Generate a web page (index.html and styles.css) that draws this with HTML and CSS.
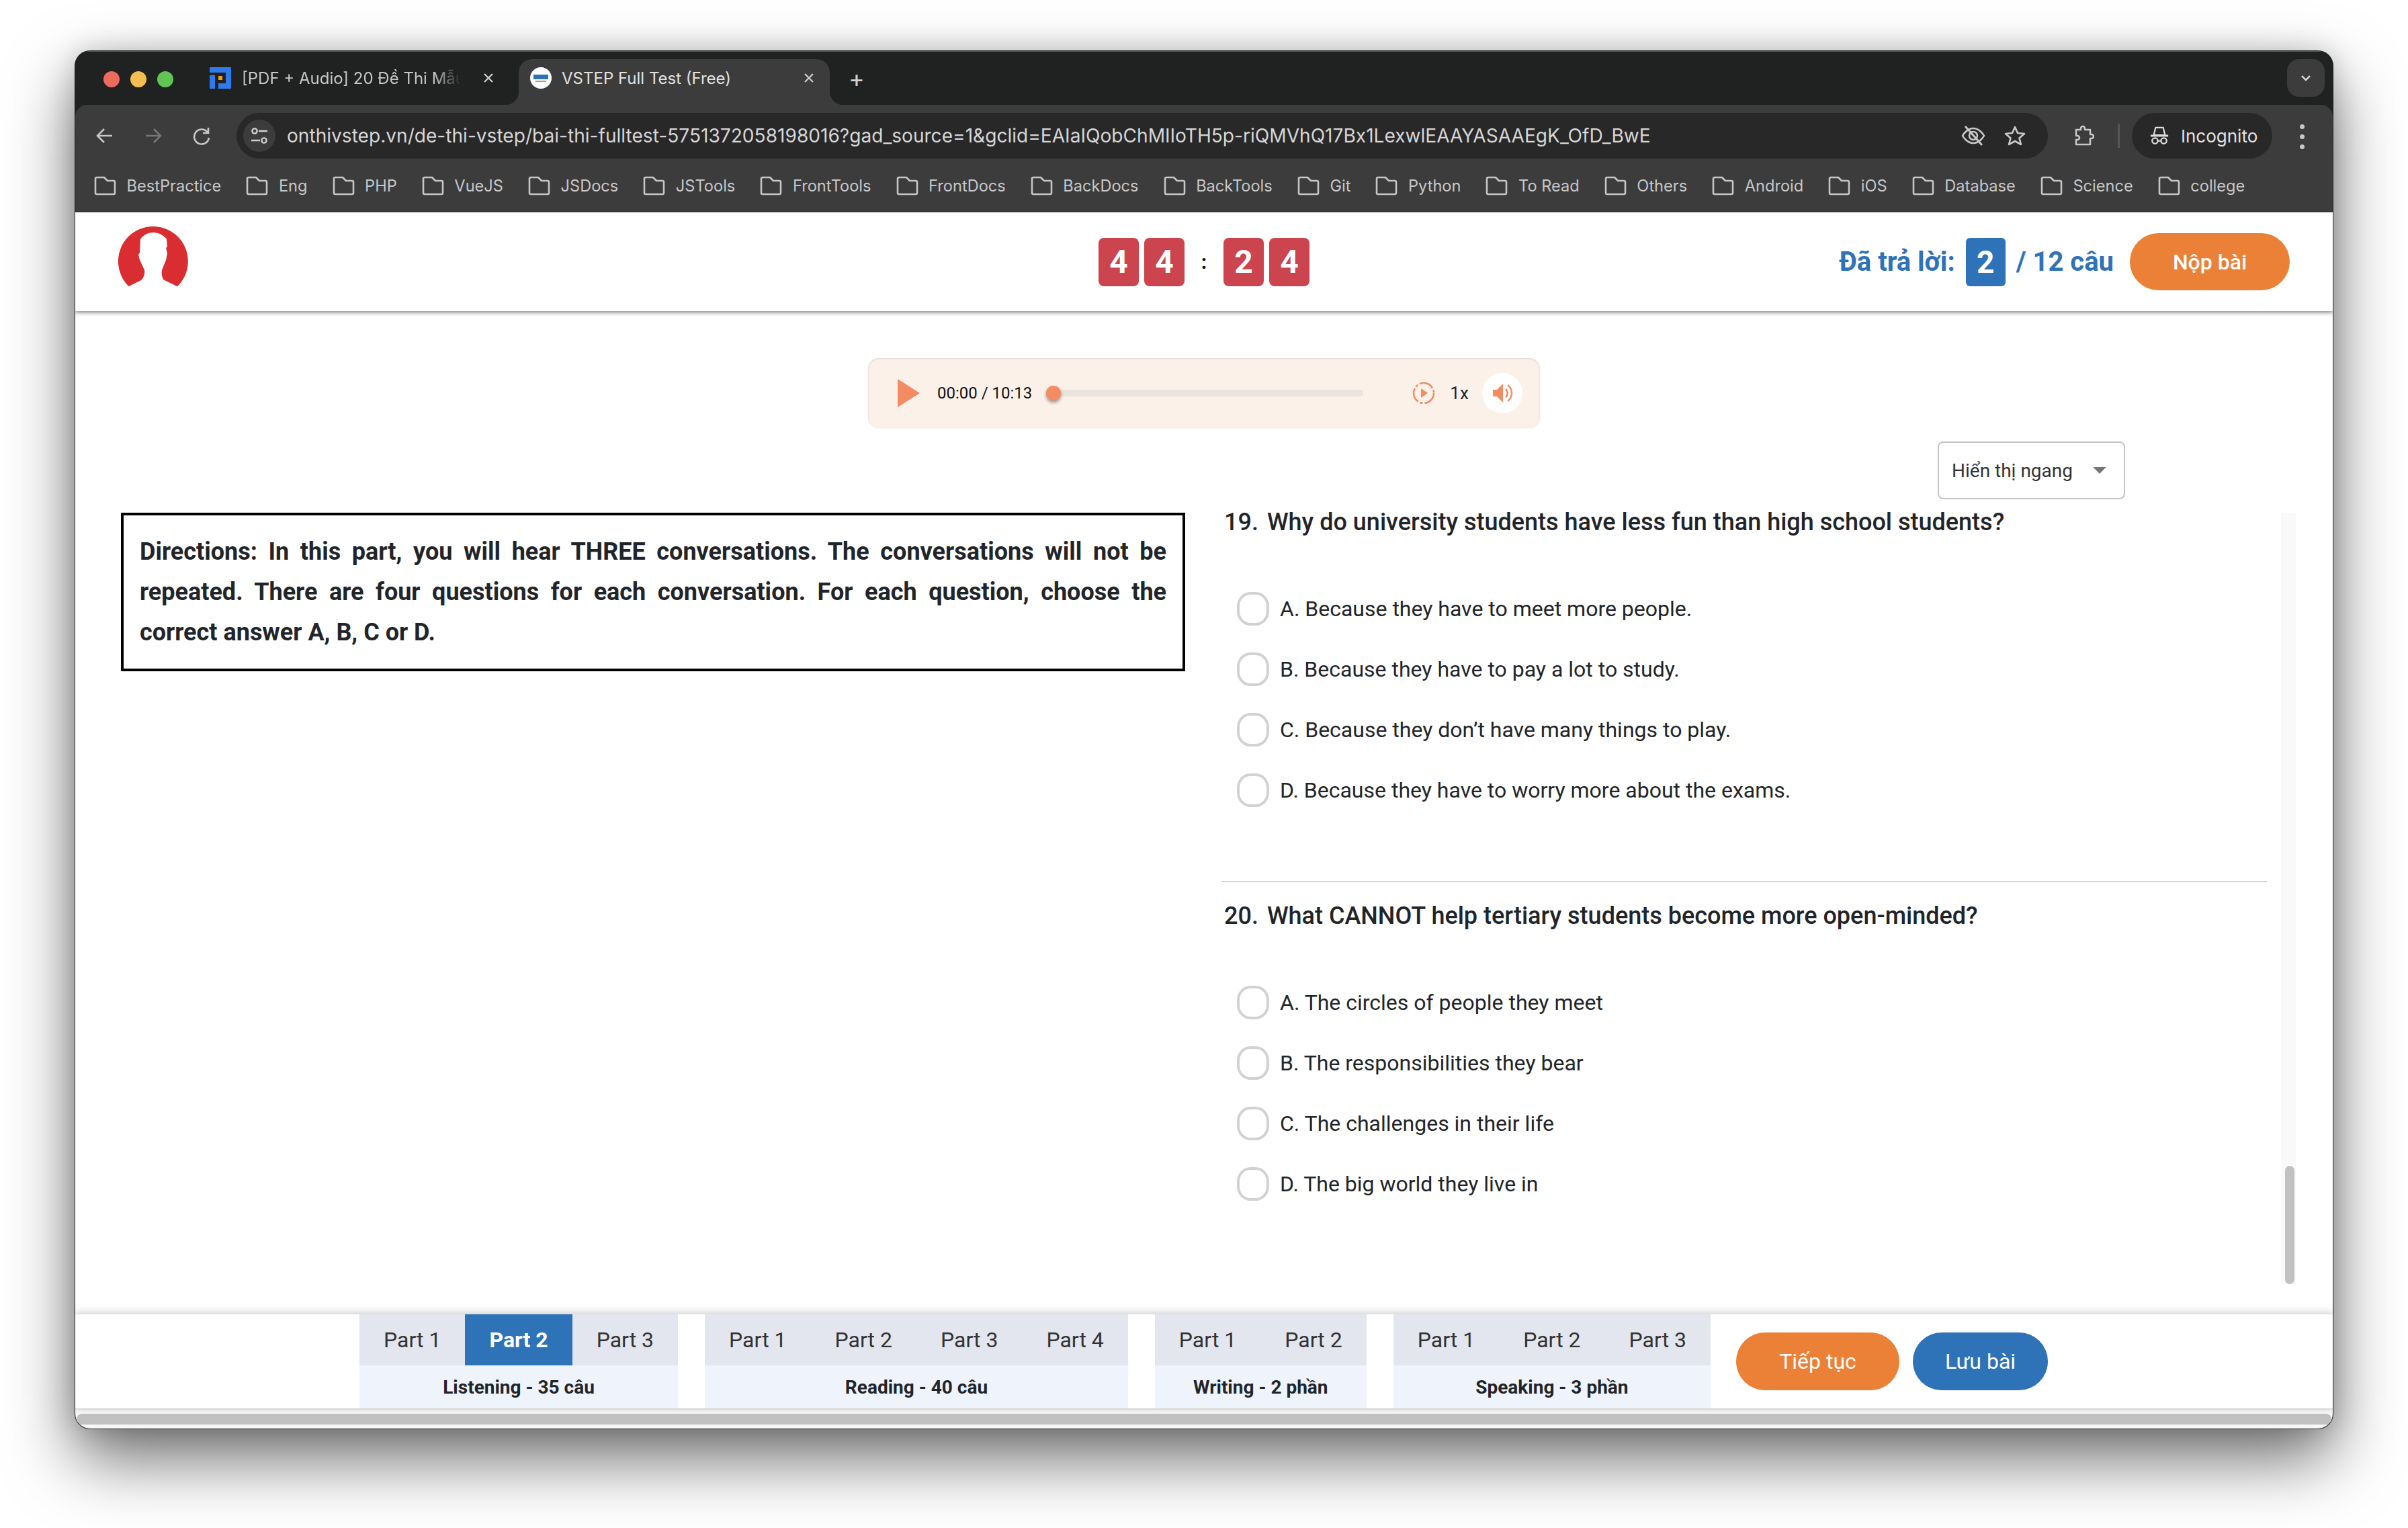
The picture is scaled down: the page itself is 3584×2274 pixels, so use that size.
FILE: index.html
```html
<!DOCTYPE html>
<html lang="vi">
<head>
    <meta charset="UTF-8">
    <meta name="viewport" content="width=device-width, initial-scale=1.0">
    <title>VSTEP Full Test (Free)</title>
    <link rel="stylesheet" href="styles.css">
</head>
<body>
    <svg class="defs" width="0" height="0">
        <symbol id="folder" viewBox="0 0 33 32">
            <path d="M2 27V6a2 2 0 0 1 2-2h11l5 5h9a2 2 0 0 1 2 2v16a2 2 0 0 1-2 2H4a2 2 0 0 1-2-2z" fill="none" stroke="#c4c7c5" stroke-width="2.6" stroke-linejoin="round"/>
        </symbol>
        <symbol id="close" viewBox="0 0 16 16">
            <path d="M2 2l12 12M14 2L2 14" fill="none" stroke="#d0d0d0" stroke-width="2.2"/>
        </symbol>
    </svg>
    <div class="window">
        <div class="tabstrip">
            <div class="lights">
                <span class="light red"></span>
                <span class="light yellow"></span>
                <span class="light green"></span>
            </div>
            <div class="tab">
                <svg class="tab-icon" viewBox="0 0 32 32" width="32" height="32">
                    <path d="M1 0h30a1 1 0 0 1 1 1v30a1 1 0 0 1-1 1H13v-8h11V8H0V1a1 1 0 0 1 1-1zM0 12h8v20H1a1 1 0 0 1-1-1z" fill="#2f7bee"/>
                    <rect x="13" y="13" width="6" height="6" fill="#f59a23"/>
                </svg>
                <span class="tab-title tab-title-fade">[PDF + Audio] 20 Đề Thi Mẫu</span>
                <svg class="tab-close" width="16" height="16"><use href="#close"/></svg>
            </div>
            <div class="tab tab-active">
                <svg class="tab-icon" viewBox="0 0 32 32" width="32" height="32">
                    <circle cx="16" cy="16" r="16" fill="#fff"/>
                    <rect x="5" y="11" width="22" height="7" fill="#2e73b8"/>
                    <rect x="8" y="20" width="16" height="2" fill="#e98a3a"/>
                </svg>
                <span class="tab-title">VSTEP Full Test (Free)</span>
                <svg class="tab-close" width="16" height="16"><use href="#close"/></svg>
            </div>
            <span class="new-tab">+</span>
            <span class="tab-search">
                <svg viewBox="0 0 16 10" width="16" height="10"><path d="M2 2l6 6 6-6" fill="none" stroke="#e3e3e3" stroke-width="2.4"/></svg>
            </span>
        </div>
        <div class="toolbar">
            <div class="nav">
                <svg viewBox="0 0 28 28" width="28" height="28"><path d="M25 14H4M13 4L3 14l10 10" fill="none" stroke="#c7c7c7" stroke-width="2.6"/></svg>
                <svg viewBox="0 0 28 28" width="28" height="28"><path d="M3 14h21M15 4l10 10-10 10" fill="none" stroke="#777" stroke-width="2.6"/></svg>
                <svg viewBox="0 0 28 28" width="28" height="28"><path d="M23 9a11 11 0 1 0 2 8M24 2v8h-8" fill="none" stroke="#c7c7c7" stroke-width="2.6"/></svg>
            </div>
            <div class="omnibox">
                <span class="site-info">
                    <svg viewBox="0 0 28 28" width="28" height="28"><g fill="none" stroke="#d0d0d0" stroke-width="2.4"><circle cx="7" cy="7" r="3.6"/><circle cx="21" cy="21" r="3.6"/><path d="M13 7h13M2 21h13"/></g></svg>
                </span>
                <span class="url">onthivstep.vn/de-thi-vstep/bai-thi-fulltest-5751372058198016?gad_source=1&amp;gclid=EAIaIQobChMIIoTH5p-riQMVhQ17Bx1LexwlEAAYASAAEgK_OfD_BwE</span>
                <svg class="omni-icon" viewBox="0 0 36 32" width="36" height="32"><g fill="none" stroke="#c7c7c7" stroke-width="2.6"><path d="M2 16s6-11 16-11 16 11 16 11-6 11-16 11S2 16 2 16z"/><circle cx="18" cy="16" r="6"/><path d="M6 2l25 28" stroke-width="3"/></g></svg>
                <svg class="omni-icon" viewBox="0 0 32 32" width="32" height="32"><path d="M16 3l4 9 10 1-7.5 6.5L25 29l-9-5-9 5 2.5-9.5L2 13l10-1z" fill="none" stroke="#c7c7c7" stroke-width="2.6" stroke-linejoin="round"/></svg>
            </div>
            <svg class="ext" viewBox="0 0 32 32" width="32" height="32"><path d="M5 7h7V5a3 3 0 0 1 6 0v2h8v7h2a3 3 0 0 1 0 6h-2v9H5v-7h2a3 3 0 0 0 0-6H5z" fill="none" stroke="#c7c7c7" stroke-width="2.6" stroke-linejoin="round"/></svg>
            <span class="tool-sep"></span>
            <div class="incognito">
                <svg viewBox="0 0 32 32" width="30" height="30"><g fill="none" stroke="#dcdcdc" stroke-width="2.4"><path d="M10 3h12l3 12H7z"/><path d="M2 16h28" stroke-width="3"/><circle cx="9" cy="24" r="4.5"/><circle cx="23" cy="24" r="4.5"/><path d="M13 24h6"/></g></svg>
                <span>Incognito</span>
            </div>
            <span class="kebab"><i></i><i></i><i></i></span>
        </div>
        <div class="bookmarks">
            <span class="bookmark"><svg width="33" height="32"><use href="#folder"/></svg>BestPractice</span>
            <span class="bookmark"><svg width="33" height="32"><use href="#folder"/></svg>Eng</span>
            <span class="bookmark"><svg width="33" height="32"><use href="#folder"/></svg>PHP</span>
            <span class="bookmark"><svg width="33" height="32"><use href="#folder"/></svg>VueJS</span>
            <span class="bookmark"><svg width="33" height="32"><use href="#folder"/></svg>JSDocs</span>
            <span class="bookmark"><svg width="33" height="32"><use href="#folder"/></svg>JSTools</span>
            <span class="bookmark"><svg width="33" height="32"><use href="#folder"/></svg>FrontTools</span>
            <span class="bookmark"><svg width="33" height="32"><use href="#folder"/></svg>FrontDocs</span>
            <span class="bookmark"><svg width="33" height="32"><use href="#folder"/></svg>BackDocs</span>
            <span class="bookmark"><svg width="33" height="32"><use href="#folder"/></svg>BackTools</span>
            <span class="bookmark"><svg width="33" height="32"><use href="#folder"/></svg>Git</span>
            <span class="bookmark"><svg width="33" height="32"><use href="#folder"/></svg>Python</span>
            <span class="bookmark"><svg width="33" height="32"><use href="#folder"/></svg>To Read</span>
            <span class="bookmark"><svg width="33" height="32"><use href="#folder"/></svg>Others</span>
            <span class="bookmark"><svg width="33" height="32"><use href="#folder"/></svg>Android</span>
            <span class="bookmark"><svg width="33" height="32"><use href="#folder"/></svg>iOS</span>
            <span class="bookmark"><svg width="33" height="32"><use href="#folder"/></svg>Database</span>
            <span class="bookmark"><svg width="33" height="32"><use href="#folder"/></svg>Science</span>
            <span class="bookmark"><svg width="33" height="32"><use href="#folder"/></svg>college</span>
        </div>

        <header class="test-header">
            <svg class="logo" viewBox="0 0 104 90" width="104" height="90">
                <path d="M15.7 89.3A52 52 0 1 1 88 89.3L67 79C65 74 64 69 65 65L71 50 73 40 71 32 73 30 72 19C68 13 60 9 52 9 44 9 37 13 33 19L32 39 30 42 32 50 39 65C40 70 38 76 34 80z" fill="#d92d32"/>
            </svg>
            <div class="timer">
                <span class="digit">4</span><span class="digit">4</span>
                <span class="colon">:</span>
                <span class="digit">2</span><span class="digit">4</span>
            </div>
            <div class="answered">
                <span>Đã trả lời:</span>
                <span class="answered-num">2</span>
                <span>/ 12 câu</span>
                <button class="btn btn-orange btn-submit">Nộp bài</button>
            </div>
        </header>

        <main class="test-main">
            <div class="player-row">
                <div class="player">
                    <svg class="play" viewBox="0 0 33 42" width="33" height="42"><path d="M0 0l33 21L0 42z" fill="#f38b63"/></svg>
                    <span class="time">00:00 / 10:13</span>
                    <span class="track"><span class="thumb"></span></span>
                    <svg class="replay" viewBox="0 0 34 34" width="34" height="34"><circle cx="17" cy="17" r="15" fill="none" stroke="#f38b63" stroke-width="2.6" stroke-dasharray="22 3 4 3"/><path d="M13 10l10 7-10 7z" fill="#f38b63"/></svg>
                    <span class="speed">1x</span>
                    <span class="volume">
                        <svg viewBox="0 0 32 32" width="32" height="32"><path d="M2 11h6l9-9v28l-9-9H2z" fill="#f38b63"/><path d="M21 10a8 8 0 0 1 0 12M24 4a15 15 0 0 1 0 24" fill="none" stroke="#f38b63" stroke-width="2.4"/></svg>
                    </span>
                </div>
            </div>
            <div class="view-row">
                <div class="view-select">Hiển thị ngang<span class="caret"></span></div>
            </div>
            <div class="columns">
                <div class="left-col">
                    <div class="directions">Directions: In this part, you will hear THREE conversations. The conversations will not be repeated. There are four questions for each conversation. For each question, choose the correct answer A, B, C or D.</div>
                </div>
                <div class="right-col">
                    <div class="questions">
                        <section class="question">
                            <h3><span>19.</span> Why do university students have less fun than high school students?</h3>
                            <label class="option"><i class="radio"></i>A. Because they have to meet more people.</label>
                            <label class="option"><i class="radio"></i>B. Because they have to pay a lot to study.</label>
                            <label class="option"><i class="radio"></i>C. Because they don’t have many things to play.</label>
                            <label class="option"><i class="radio"></i>D. Because they have to worry more about the exams.</label>
                        </section>
                        <section class="question">
                            <h3><span>20.</span> What CANNOT help tertiary students become more open-minded?</h3>
                            <label class="option"><i class="radio"></i>A. The circles of people they meet</label>
                            <label class="option"><i class="radio"></i>B. The responsibilities they bear</label>
                            <label class="option"><i class="radio"></i>C. The challenges in their life</label>
                            <label class="option"><i class="radio"></i>D. The big world they live in</label>
                        </section>
                    </div>
                    <div class="scroll-v"><span class="scroll-v-thumb"></span></div>
                </div>
            </div>
        </main>

        <footer class="test-footer">
            <div class="skill">
                <div class="parts"><span class="part">Part 1</span><span class="part part-active">Part 2</span><span class="part">Part 3</span></div>
                <div class="skill-name">Listening - 35 câu</div>
            </div>
            <div class="skill">
                <div class="parts"><span class="part">Part 1</span><span class="part">Part 2</span><span class="part">Part 3</span><span class="part">Part 4</span></div>
                <div class="skill-name">Reading - 40 câu</div>
            </div>
            <div class="skill">
                <div class="parts"><span class="part">Part 1</span><span class="part">Part 2</span></div>
                <div class="skill-name">Writing - 2 phần</div>
            </div>
            <div class="skill">
                <div class="parts"><span class="part">Part 1</span><span class="part">Part 2</span><span class="part">Part 3</span></div>
                <div class="skill-name">Speaking - 3 phần</div>
            </div>
            <div class="footer-btns">
                <button class="btn btn-orange btn-next">Tiếp tục</button>
                <button class="btn btn-blue btn-save">Lưu bài</button>
            </div>
        </footer>
        <div class="scroll-h"><span class="scroll-h-thumb"></span></div>
    </div>
</body>
</html>
```

FILE: styles.css
```css
* {
    box-sizing: border-box;
}
html, body {
    height: 100%;
}
body {
    margin: 0;
    padding: 76px 112px 0;
    background-color: #fff;
    font-family: Roboto, "Liberation Sans", sans-serif;
    color: #212529;
    overflow: hidden;
}
.defs {
    display: block;
    height: 0;
}
.window {
    display: flex;
    flex-direction: column;
    width: 3360px;
    height: 2050px;
    border-radius: 22px;
    overflow: hidden;
    background-color: #202221;
    box-shadow: 0 0 0 1px #222, 0 44px 100px rgba(0,0,0,.58), 0 0 40px rgba(0,0,0,.18);
}

/* browser chrome */
.tabstrip {
    display: flex;
    align-items: flex-end;
    height: 80px;
    flex: none;
    background-color: #202221;
    border-top: 1px solid #5a5a5a;
    color: #c7c7c7;
    font-family: Inter, "Noto Sans", sans-serif;
    font-size: 24px;
}
.lights {
    display: flex;
    gap: 16px;
    align-self: flex-start;
    margin: 29px 0 0 42px;
}
.light {
    width: 24px;
    height: 24px;
    border-radius: 50%;
}
.red { background-color: #ed6a5e; }
.yellow { background-color: #f5bf4f; }
.green { background-color: #61c554; }
.tab {
    display: flex;
    align-items: center;
    width: 486px;
    height: 68px;
    margin-left: 28px;
    padding: 0 0 12px 26px;
}
.tab-icon {
    flex: none;
}
.tab-title {
    width: 340px;
    margin-left: 16px;
    white-space: nowrap;
    overflow: hidden;
}
.tab-title-fade {
    -webkit-mask-image: linear-gradient(90deg, #000 84%, transparent 96%);
    mask-image: linear-gradient(90deg, #000 84%, transparent 96%);
}
.tab-close {
    flex: none;
    margin-left: 19px;
}
.tab-active {
    position: relative;
    width: 463px;
    margin-left: 0;
    padding-left: 17px;
    background-color: #3c3c3c;
    border-radius: 20px 20px 0 0;
    color: #e3e3e3;
}
.tab-active::before,
.tab-active::after {
    content: "";
    position: absolute;
    bottom: 0;
    width: 20px;
    height: 20px;
}
.tab-active::before {
    left: -20px;
    background: radial-gradient(circle at 0 0, transparent 20px, #3c3c3c 20.5px);
}
.tab-active::after {
    right: -20px;
    background: radial-gradient(circle at 100% 0, transparent 20px, #3c3c3c 20.5px);
}
.tab-active .tab-title {
    margin-left: 15px;
}
.tab-active .tab-close {
    margin-left: 20px;
}
.new-tab {
    align-self: center;
    margin-left: 28px;
    font-size: 36px;
    line-height: 1;
    color: #d0d0d0;
}
.tab-search {
    display: flex;
    align-items: center;
    justify-content: center;
    align-self: flex-start;
    width: 56px;
    height: 56px;
    margin: 11px 12px 0 auto;
    background-color: #3c3c3c;
    border-radius: 18px;
}
.toolbar {
    display: flex;
    align-items: flex-start;
    flex: none;
    height: 92px;
    padding: 12px 0 0 30px;
    background-color: #3c3c3c;
    border-radius: 18px 18px 0 0;
    color: #e3e3e3;
    font-family: Inter, "Noto Sans", sans-serif;
}
.nav {
    display: flex;
    align-items: center;
    gap: 44px;
    width: 210px;
    height: 68px;
}
.omnibox {
    display: flex;
    align-items: center;
    width: 2696px;
    height: 68px;
    padding: 0 33px 0 10px;
    background-color: #282828;
    border-radius: 34px;
}
.site-info {
    display: flex;
    align-items: center;
    justify-content: center;
    width: 48px;
    height: 48px;
    flex: none;
    background-color: #3c3c3c;
    border-radius: 50%;
}
.url {
    flex: 1;
    margin-left: 17px;
    font-size: 28.1px;
    white-space: nowrap;
    color: #d6d6d6;
}
.omni-icon {
    flex: none;
    margin-left: 28px;
}
.ext {
    margin: 18px 0 0 37px;
}
.tool-sep {
    width: 3px;
    height: 36px;
    margin: 16px 18px 0 35px;
    background-color: #585858;
}
.incognito {
    display: flex;
    align-items: center;
    gap: 17px;
    width: 209px;
    height: 68px;
    padding-left: 26px;
    background-color: #282828;
    border-radius: 34px;
    font-size: 26px;
}
.kebab {
    display: flex;
    flex-direction: column;
    gap: 8px;
    margin: 17px 0 0 41px;
}
.kebab i {
    display: block;
    width: 7px;
    height: 7px;
    border-radius: 50%;
    background-color: #c7c7c7;
}
.bookmarks {
    display: flex;
    align-items: center;
    flex: none;
    gap: 37px;
    height: 68px;
    padding: 0 0 12px 28px;
    background-color: #3c3c3c;
    font-family: Inter, "Noto Sans", sans-serif;
    font-size: 23.6px;
    color: #c7c7c7;
}
.bookmark {
    display: flex;
    align-items: center;
    gap: 15.6px;
}

/* test page header */
.test-header {
    display: grid;
    grid-template-columns: 1fr auto 1fr;
    align-items: center;
    flex: none;
    position: relative;
    z-index: 2;
    height: 147px;
    padding: 0 64px;
    background-color: #fff;
    box-shadow: 0 2px 6px rgba(0,0,0,.5);
}
.logo {
    margin-bottom: 15px;
}
.timer {
    display: flex;
    align-items: center;
    gap: 8px;
}
.digit {
    display: flex;
    align-items: center;
    justify-content: center;
    width: 60px;
    height: 72px;
    background-color: #cc444d;
    border-radius: 8px;
    color: #fff;
    font-size: 48px;
    font-weight: 700;
}
.colon {
    width: 42px;
    text-align: center;
    font-size: 30px;
    font-weight: 700;
    color: #111;
}
.answered {
    display: flex;
    align-items: center;
    justify-self: end;
    gap: 16px;
    font-size: 40px;
    font-weight: 700;
    color: #2e73b8;
}
.answered-num {
    display: flex;
    align-items: center;
    justify-content: center;
    width: 59px;
    height: 72px;
    background-color: #2e73b8;
    border-radius: 6px;
    color: #fff;
    font-size: 46px;
    font-weight: 700;
}
.btn {
    border: none;
    font-family: Roboto, "Liberation Sans", sans-serif;
    color: #fff;
    cursor: pointer;
}
.btn-orange { background-color: #eb8136; }
.btn-blue { background-color: #2e73b8; }
.btn-submit {
    width: 238px;
    height: 85px;
    margin-left: 8px;
    border-radius: 43px;
    font-size: 32px;
    font-weight: 500;
}

/* main area */
.test-main {
    display: flex;
    flex-direction: column;
    flex: 1;
    min-height: 0;
    overflow: hidden;
    background-color: #fff;
}
.player-row {
    display: flex;
    justify-content: center;
    padding-top: 70px;
}
.player {
    display: flex;
    align-items: center;
    width: 1000px;
    height: 104px;
    padding: 0 26px 0 44px;
    background-color: #fcf1e9;
    border-radius: 16px;
    box-shadow: inset 0 1px 3px rgba(0,0,0,.12), 0 0 2px rgba(0,0,0,.08);
}
.time {
    margin-left: 26px;
    font-size: 24px;
    color: #111;
}
.track {
    display: block;
    position: relative;
    width: 462px;
    height: 10px;
    margin-left: 31px;
    background-color: #ebe3dd;
    border-radius: 5px;
}
.thumb {
    position: absolute;
    left: -10px;
    top: -6px;
    width: 22px;
    height: 22px;
    background-color: #f38b63;
    border-radius: 50%;
    box-shadow: 0 3px 5px rgba(0,0,0,.4);
}
.replay {
    margin-left: 73px;
}
.speed {
    margin-left: 22px;
    font-size: 26px;
    color: #222;
}
.volume {
    display: flex;
    align-items: center;
    justify-content: center;
    width: 60px;
    height: 60px;
    margin-left: 20px;
    background-color: #fff;
    border-radius: 50%;
}
.view-row {
    display: flex;
    justify-content: flex-end;
    padding: 20px 309px 0 0;
}
.view-select {
    display: flex;
    align-items: center;
    justify-content: space-between;
    width: 279px;
    height: 86px;
    padding: 0 26px 0 19px;
    border: 2px solid #c4c4c4;
    border-radius: 8px;
    font-size: 28px;
    color: #333;
}
.caret {
    width: 0;
    height: 0;
    border-left: 10px solid transparent;
    border-right: 10px solid transparent;
    border-top: 10px solid #777;
}
.columns {
    display: flex;
    flex: 1;
    min-height: 0;
    margin-top: 20px;
    padding: 0 0 45px 68px;
}
.left-col {
    width: 1584px;
    flex: none;
}
.directions {
    padding: 24px;
    border: 4px solid #000;
    font-size: 36px;
    font-weight: 700;
    line-height: 60px;
    text-align: justify;
    color: #212529;
}
.right-col {
    display: flex;
    flex: 1;
    min-height: 0;
    margin-left: 54px;
}
.questions {
    width: 1556px;
    flex: none;
}
.question {
    padding: 0 4px 70px;
    border-bottom: 2px solid #d5d5d5;
}
.question + .question {
    padding-top: 36px;
    border-bottom: none;
}
.question h3 {
    margin: 0 0 90px;
    font-size: 36px;
    font-weight: 500;
    line-height: 28px;
    color: #212529;
}
.question h3 span {
    margin-right: 4px;
}
.option {
    display: flex;
    align-items: center;
    gap: 16px;
    height: 50px;
    margin: 0 0 40px 19px;
    font-size: 32px;
    color: #212529;
}
.radio {
    display: block;
    flex: none;
    width: 48px;
    height: 50px;
    border: 4px solid #d2d2d2;
    border-radius: 42%;
}
.scroll-v {
    display: flex;
    flex-direction: column;
    align-items: flex-end;
    justify-content: flex-end;
    width: 22px;
    margin-left: 21px;
    padding-right: 2px;
    background-color: #f9f9f9;
}
.scroll-v-thumb {
    display: block;
    width: 14px;
    height: 176px;
    background-color: #c1c1c1;
    border-radius: 7px;
}

/* footer nav */
.test-footer {
    display: flex;
    flex: none;
    height: 140px;
    padding-left: 423px;
    gap: 40px;
    position: relative;
    background-color: #fff;
    box-shadow: 0 -2px 12px rgba(0,0,0,.22);
}
.skill {
    display: flex;
    flex-direction: column;
    background-color: #eff3fc;
}
.parts {
    display: flex;
    height: 76px;
    background-color: #e3e6ee;
}
.part {
    display: flex;
    align-items: center;
    justify-content: center;
    padding: 0 36px;
    font-size: 32px;
    color: #333;
}
.part-active {
    background-color: #2e73b8;
    color: #fff;
    font-weight: 700;
}
.skill-name {
    display: flex;
    align-items: center;
    justify-content: center;
    flex: 1;
    font-size: 28px;
    font-weight: 700;
    color: #212529;
}
.footer-btns {
    display: flex;
    align-items: center;
    gap: 20px;
    margin-left: -2px;
}
.btn-next, .btn-save {
    height: 86px;
    border-radius: 43px;
    font-size: 32px;
}
.btn-next {
    width: 243px;
}
.btn-save {
    width: 201px;
}
.scroll-h {
    display: flex;
    align-items: center;
    flex: none;
    height: 30px;
    padding: 0 2px;
    background-color: #f6f6f6;
    border-top: 2px solid #e6e6e6;
}
.scroll-h-thumb {
    display: block;
    width: 100%;
    height: 16px;
    background-color: #c1c1c1;
    border-radius: 8px;
}
```
